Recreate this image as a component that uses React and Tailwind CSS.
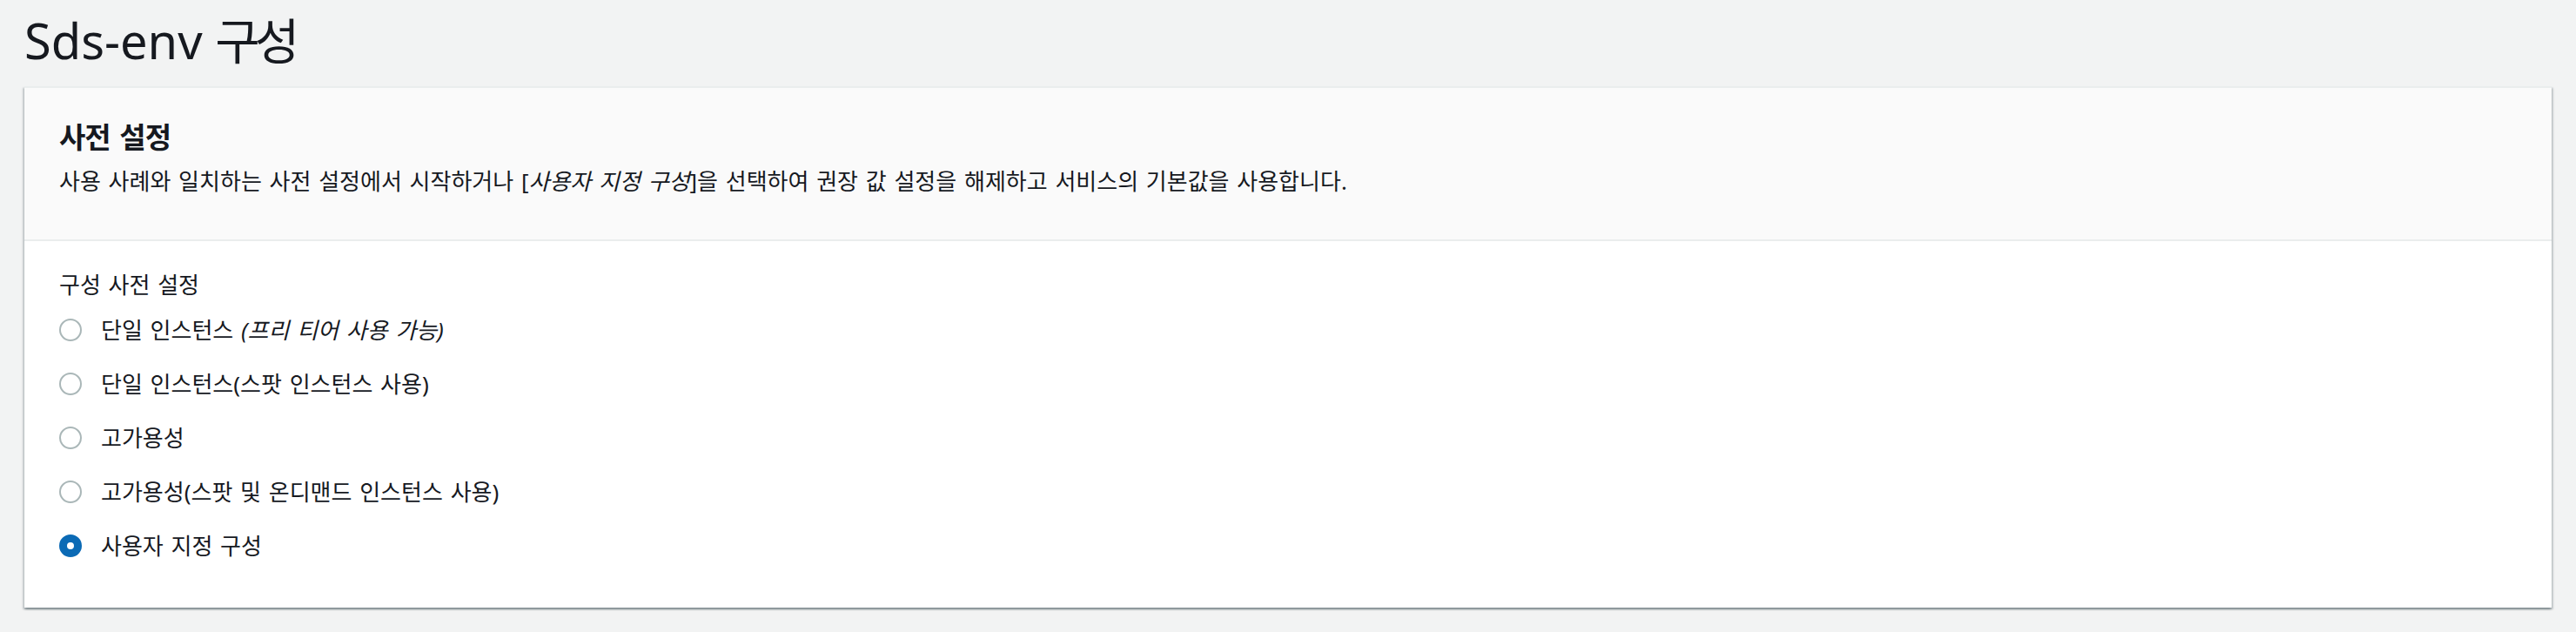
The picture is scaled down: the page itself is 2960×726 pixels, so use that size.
import React from "react";

const KR = { fontFamily: '"Noto Sans", "Noto Sans CJK KR", sans-serif' };

function Radio({ checked, children }) {
  return (
    <div className="flex h-[62px] items-center gap-[22px]">
      {checked ? (
        <span className="box-border block h-[26px] w-[26px] shrink-0 rounded-full border-[9px] border-[#0b6ab5] bg-white" />
      ) : (
        <span className="box-border block h-[26px] w-[26px] shrink-0 rounded-full border-2 border-[#aab7b8] bg-white" />
      )}
      <span className="text-[26px] leading-[38px] tracking-[0px] [word-spacing:2px] text-[#16191f]">
        {children}
      </span>
    </div>
  );
}

export default function App() {
  return (
    <div className="min-h-screen bg-[#f2f3f3] px-[28px] pt-[12px] pb-[28px]" style={KR}>
      <h1 className="mb-[19px] text-[56px] font-normal leading-[68px] text-[#16191f]">
        Sds-env <span className="tracking-[-6px]">구성</span>
      </h1>
      <div className="border-t-2 border-[#eaeded] bg-white shadow-[0_2px_2px_0_rgba(0,28,36,0.3),2px_2px_2px_0_rgba(0,28,36,0.15),-2px_2px_2px_0_rgba(0,28,36,0.15)]">
        <div className="border-b-2 border-[#eaeded] bg-[#fafafa] px-[40px] pt-[37px] pb-[48px]">
          <h2 className="text-[33px] font-bold leading-[40px] tracking-[-1px] [word-spacing:3px] text-[#16191f]">
            사전 설정
          </h2>
          <p className="mt-[11px] text-[26px] leading-[38px] tracking-[0px] [word-spacing:2px] text-[#16191f]">
            사용 사례와 일치하는 사전 설정에서 시작하거나 [<span className="italic">사용자 지정 구성</span>]을 선택하여 권장 값 설정을 해제하고 서비스의 기본값을 사용합니다.
          </p>
        </div>
        <div className="px-[40px] pt-[31px] pb-[40px]">
          <div className="mb-[2px] text-[26px] leading-[38px] tracking-[0px] [word-spacing:2px] text-[#16191f]">
            구성 사전 설정
          </div>
          <div className="flex flex-col">
            <Radio>
              단일 인스턴스 <span className="italic">(프리 티어 사용 가능)</span>
            </Radio>
            <Radio>단일 인스턴스(스팟 인스턴스 사용)</Radio>
            <Radio>고가용성</Radio>
            <Radio>고가용성(스팟 및 온디맨드 인스턴스 사용)</Radio>
            <Radio checked>사용자 지정 구성</Radio>
          </div>
        </div>
      </div>
    </div>
  );
}
